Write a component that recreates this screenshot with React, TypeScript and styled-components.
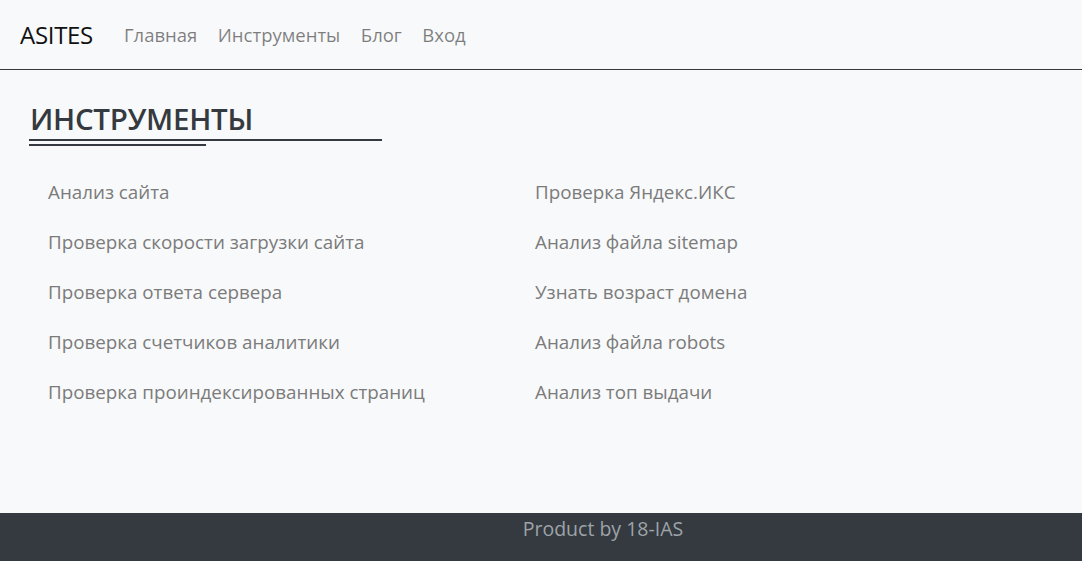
import React from "react";
import styled, { createGlobalStyle } from "styled-components";

const Global = createGlobalStyle`
  html, body { margin: 0; padding: 0; background: #f8f9fa; }
  body { font-family: "Open Sans", "Noto Sans", sans-serif; }
  #root { min-height: 100vh; }
`;

const Page = styled.div`
  min-height: 100vh;
  display: flex;
  flex-direction: column;
  background: #f8f9fa;
`;

const Navbar = styled.nav`
  height: 69px;
  border-bottom: 1px solid #343a40;
  display: flex;
  align-items: center;
  padding: 0 20px;
  box-sizing: content-box;
`;

const Brand = styled.a`
  font-size: 24px;
  color: #111;
  margin-right: 31px;
  letter-spacing: -0.3px;
`;

const NavList = styled.div`
  display: flex;
  gap: 20.5px;
`;

const NavLink = styled.a`
  font-size: 18.5px;
  color: rgba(0, 0, 0, 0.5);
`;

const Main = styled.main`
  flex: 1;
  padding: 31px 0 0 29px;
`;

const Heading = styled.h1`
  margin: 0;
  padding-left: 1px;
  font-size: 29.5px;
  font-weight: 600;
  color: #343a40;
  line-height: 36px;
  letter-spacing: -0.3px;
`;

const Rule = styled.div<{ $w: number }>`
  width: ${(p) => p.$w}px;
  height: 2px;
  background: #343a40;
`;

const Rules = styled.div`
  display: flex;
  flex-direction: column;
  gap: 3px;
  margin-top: 2px;
`;

const Grid = styled.div`
  display: grid;
  grid-template-columns: 487px 487px;
  grid-auto-flow: column;
  grid-template-rows: repeat(5, 50px);
  margin-top: 21px;
  padding-left: 3px;
`;

const Item = styled.a`
  font-size: 18.8px;
  color: #7b7b7b;
  padding: 0 16px;
  line-height: 50px;
  height: 50px;
`;

const Footer = styled.footer`
  height: 48px;
  background: #343a40;
  display: flex;
  justify-content: center;
  padding-left: 124px;
`;

const FooterText = styled.span`
  color: #9ea3a8;
  font-size: 19.5px;
  line-height: 32px;
`;

const left = [
  "Анализ сайта",
  "Проверка скорости загрузки сайта",
  "Проверка ответа сервера",
  "Проверка счетчиков аналитики",
  "Проверка проиндексированных страниц",
];
const right = [
  "Проверка Яндекс.ИКС",
  "Анализ файла sitemap",
  "Узнать возраст домена",
  "Анализ файла robots",
  "Анализ топ выдачи",
];

export default function App() {
  return (
    <Page>
      <Global />
      <Navbar>
        <Brand>ASITES</Brand>
        <NavList>
          <NavLink>Главная</NavLink>
          <NavLink>Инструменты</NavLink>
          <NavLink>Блог</NavLink>
          <NavLink>Вход</NavLink>
        </NavList>
      </Navbar>
      <Main>
        <Heading>ИНСТРУМЕНТЫ</Heading>
        <Rules>
          <Rule $w={353} />
          <Rule $w={177} />
        </Rules>
        <Grid>
          {[...left, ...right].map((t) => (
            <Item key={t}>{t}</Item>
          ))}
        </Grid>
      </Main>
      <Footer>
        <FooterText>Product by 18-IAS</FooterText>
      </Footer>
    </Page>
  );
}
